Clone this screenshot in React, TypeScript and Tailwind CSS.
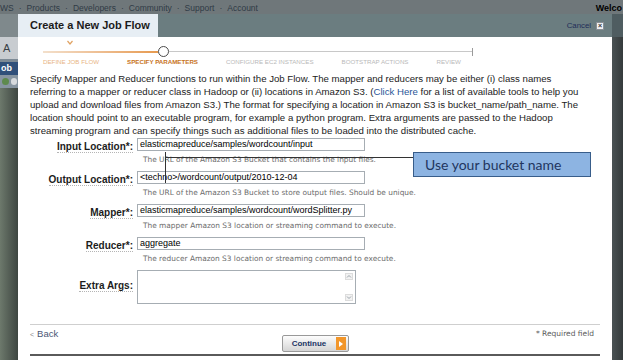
import React from 'react';

const steps = [
  { label: 'DEFINE JOB FLOW', cls: 'text-[#e8b585]' },
  { label: 'SPECIFY PARAMETERS', cls: 'text-[#c7731c] font-bold' },
  { label: 'CONFIGURE EC2 INSTANCES', cls: 'text-[#b9b9b9]' },
  { label: 'BOOTSTRAP ACTIONS', cls: 'text-[#b9b9b9]' },
  { label: 'REVIEW', cls: 'text-[#b9b9b9]' },
];

const fields = [
  {
    label: 'Input Location*:',
    value: 'elasticmapreduce/samples/wordcount/input',
    help: 'The URL of the Amazon S3 Bucket that contains the input files.',
  },
  {
    label: 'Output Location*:',
    value: '<techno>/wordcount/output/2010-12-04',
    help: 'The URL of the Amazon S3 Bucket to store output files. Should be unique.',
  },
  {
    label: 'Mapper*:',
    value: 'elasticmapreduce/samples/wordcount/wordSplitter.py',
    help: 'The mapper Amazon S3 location or streaming command to execute.',
  },
  {
    label: 'Reducer*:',
    value: 'aggregate',
    help: 'The reducer Amazon S3 location or streaming command to execute.',
  },
];

const FieldLabel = ({ text }: { text: string }) => (
  <div className="w-[115px] shrink-0 text-right">
    <span className="border-b border-dotted border-[#b5b5b5] text-[10px] font-bold leading-[11px] text-[#1c1c1c]">
      {text}
    </span>
  </div>
);

export default function App() {
  return (
    <div className="relative flex h-[360px] w-[623px] flex-col overflow-hidden bg-[#5b6462] font-['Liberation_Sans',Arial,sans-serif]">
      {/* site nav behind the dialog */}
      <div className="flex h-[14px] shrink-0 items-end bg-[#6f777a] pb-px">
        <div className="flex gap-[5px] whitespace-nowrap text-[8.5px] leading-[10px] text-[#2f3b46]">
          <span>WS</span>
          <span>·</span>
          <span>Products</span>
          <span>·</span>
          <span>Developers</span>
          <span>·</span>
          <span>Community</span>
          <span>·</span>
          <span>Support</span>
          <span>·</span>
          <span>Account</span>
        </div>
        <div className="ml-auto whitespace-nowrap pr-px text-[9px] font-bold leading-[10px] text-black">Welco</div>
      </div>

      <div className="flex flex-1">
        {/* left page strip */}
        <div className="flex w-[18px] shrink-0 flex-col">
          <div className="h-[23px] bg-[#7f898c]" />
          <div className="h-[22px] bg-[#c8ccd0] pl-[3px] text-[11px] leading-[22px] text-[#3a3f45]">A</div>
          <div className="h-[3px] bg-[#7d8a95]" />
          <div className="h-[13px] bg-[#30507a] pl-[1px] text-[9px] font-bold leading-[13px] text-white">ob</div>
          <div className="flex h-[13px] items-center gap-[2px] bg-[#8795a1] pl-[2px]">
            <div className="h-[7px] w-[7px] rounded-full bg-[#5e8a4e]" />
            <div className="h-[7px] w-[6px] rounded-full bg-[#d7dadd]" />
          </div>
          <div className="flex-1 bg-gradient-to-r from-[#6d796c] to-[#3e4641]" />
        </div>

        {/* dialog */}
        <div className="flex w-[594px] shrink-0 flex-col">
          <div className="flex h-[23px] shrink-0 items-stretch bg-[#6b7d80]">
            <div className="flex w-[140px] items-center bg-[#e7eef4] pl-[12px]">
              <span className="text-[11px] font-bold text-[#1b1b1b]">Create a New Job Flow</span>
            </div>
            <div className="ml-auto flex items-center gap-[5px] pr-[8px]">
              <span className="text-[7.8px] text-[#1f2d58]">Cancel</span>
              <span className="flex h-[8px] w-[8px] items-center justify-center border border-[#8a8f95] bg-[#eef0f2] text-[7px] font-bold leading-none text-[#333]">
                ×
              </span>
            </div>
          </div>

          <div className="flex flex-1 flex-col bg-white">
            {/* progress */}
            <div className="ml-[25px] w-[430px]">
              <div className="mt-[3px] h-[6px] pl-[24px]">
                <svg width="6" height="5" viewBox="0 0 6 5">
                  <path d="M0.5 1 L3 4 L5.5 1" fill="none" stroke="#e0a262" strokeWidth="1.2" />
                </svg>
              </div>
              <div className="flex h-[11px] items-center">
                <div className="h-[2px] w-[115px] bg-gradient-to-r from-[#f3e0cc] to-[#e69a4e]" />
                <div className="h-[11px] w-[11px] shrink-0 rounded-full border-[1.5px] border-[#4b4b4b] bg-white" />
                <div className="h-px flex-1 bg-[#c8c8c8]" />
                <div className="h-[8px] w-px bg-[#9a9a9a]" />
              </div>
              <div className="mt-[1px] flex gap-[28px] whitespace-nowrap text-[6.2px] leading-[8px]">
                {steps.map((s) => (
                  <span key={s.label} className={s.cls}>
                    {s.label}
                  </span>
                ))}
              </div>
            </div>

            {/* intro */}
            <p className="ml-[12px] mt-[6px] whitespace-nowrap text-[9.65px] leading-[13px] text-[#222]">
              <span className="block">
                Specify Mapper and Reducer functions to run within the Job Flow. The mapper and reducers may be either (i) class names
              </span>
              <span className="block">
                referring to a mapper or reducer class in Hadoop or (ii) locations in Amazon S3. (
                <span className="text-[#2a5598]">Click Here</span> for a list of available tools to help you
              </span>
              <span className="block">
                upload and download files from Amazon S3.) The format for specifying a location in Amazon S3 is bucket_name/path_name. The
              </span>
              <span className="block">
                location should point to an executable program, for example a python program. Extra arguments are passed to the Hadoop
              </span>
              <span className="block">
                streaming program and can specify things such as additional files to be loaded into the distributed cache.
              </span>
            </p>

            {/* form */}
            <div className="mt-[1px]">
              {fields.map((f) => (
                <div key={f.label}>
                  <div className="flex h-[13px] items-center">
                    <FieldLabel text={f.label} />
                    <div className="ml-[4px] flex h-[13px] w-[228px] items-center border border-[#a6adb3] bg-white pl-[2px] text-[9px] text-black">
                      {f.value}
                    </div>
                  </div>
                  <div className="mb-[6px] ml-[125px] mt-[4px] h-[10px] whitespace-nowrap font-['DejaVu_Sans',Verdana,sans-serif] text-[7.4px] leading-[10px] text-[#6b6b6b]">
                    {f.help}
                  </div>
                </div>
              ))}
              <div className="flex items-start">
                <div className="mt-[2px]">
                  <FieldLabel text="Extra Args:" />
                </div>
                <div className="ml-[4px] flex h-[34px] w-[219px] justify-end border border-[#a6adb3] bg-white">
                  <div className="flex w-[10px] flex-col justify-between py-[2px]">
                    <svg width="8" height="7" viewBox="0 0 8 7">
                      <rect x="0.5" y="0.5" width="7" height="6" fill="#f2f2f2" stroke="#dcdcdc" />
                      <path d="M2 4.5 L4 2.5 L6 4.5" fill="none" stroke="#9aa3aa" strokeWidth="1" />
                    </svg>
                    <svg width="8" height="7" viewBox="0 0 8 7">
                      <rect x="0.5" y="0.5" width="7" height="6" fill="#f2f2f2" stroke="#dcdcdc" />
                      <path d="M2 2.5 L4 4.5 L6 2.5" fill="none" stroke="#9aa3aa" strokeWidth="1" />
                    </svg>
                  </div>
                </div>
              </div>
            </div>

            {/* footer */}
            <div className="mx-[12px] mt-[20px] grid h-[32px] grid-cols-3 border-t border-b-2 border-t-[#cfcfcf] border-b-[#5a5a5a]">
              <div className="pt-[3px] text-[9.5px] leading-[12px] text-[#4b5675]">
                <span className="mr-[3px] text-[7px] text-[#8a8a8a]">&lt;</span>Back
              </div>
              <div className="flex justify-center pt-[10px]">
                <div className="flex h-[17px] w-[67px] items-center rounded-[2px] border border-[#999] bg-gradient-to-b from-[#fdfdfd] to-[#d5d5d5]">
                  <span className="flex-1 text-center text-[8px] font-bold text-[#1c3464]">Continue</span>
                  <span className="mr-[2px] flex h-[13px] w-[10px] items-center justify-center bg-[#f2962a]">
                    <svg width="4" height="6" viewBox="0 0 4 6">
                      <path d="M0 0 L4 3 L0 6 Z" fill="#fff" />
                    </svg>
                  </span>
                </div>
              </div>
              <div className="pr-[6px] pt-[4px] text-right font-['DejaVu_Sans',Verdana,sans-serif] text-[7.5px] leading-[10px] text-[#5a5a5a]">
                * Required field
              </div>
            </div>
            <div className="flex-1" />
          </div>
        </div>

        {/* right page strip */}
        <div className="flex flex-1 flex-col">
          <div className="h-[23px] bg-[#4f5d61]" />
          <div className="flex-1 bg-gradient-to-r from-[#4a5254] to-[#353b3c]" />
        </div>
      </div>

      {/* annotation callout */}
      <div className="absolute left-[165px] top-[157px] h-px w-[248px] bg-[#333]" />
      <div className="absolute left-[165px] top-[152px] h-[31px] w-px bg-[#333]" />
      <div className="absolute left-[413px] top-[152px] flex h-[25px] w-[178px] items-center border border-[#385d8a] bg-[#8db4e2] pl-[11px] font-['Lato',sans-serif] text-[14px] text-[#1f3660]">
        Use your bucket name
      </div>
    </div>
  );
}
